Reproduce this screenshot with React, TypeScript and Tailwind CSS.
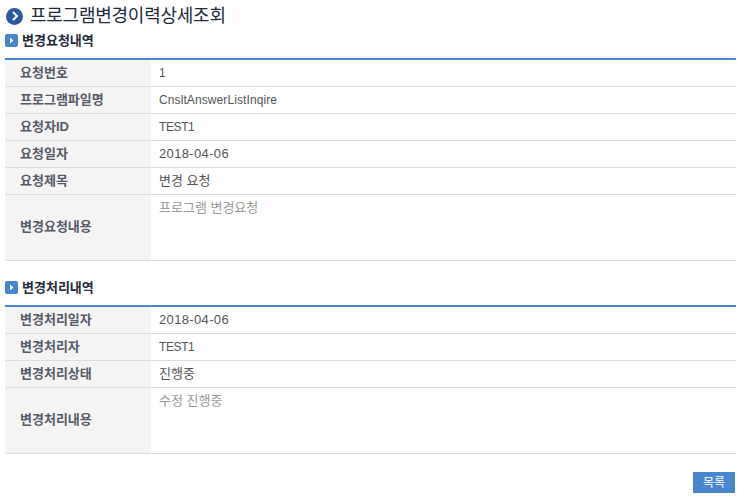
const font = { fontFamily: '"Liberation Sans", "Noto Sans CJK KR", sans-serif' };

interface Row {
  label: string;
  value: string;
  tall?: boolean;
  valueClass?: string;
}

const small = "text-[12px] tracking-[0.1px]";
const date = "text-[13px] tracking-[0.35px]";

const requestRows: Row[] = [
  { label: "요청번호", value: "1", valueClass: small },
  { label: "프로그램파일명", value: "CnsltAnswerListInqire", valueClass: small },
  { label: "요청자ID", value: "TEST1", valueClass: "text-[12px] tracking-[-0.4px]" },
  { label: "요청일자", value: "2018-04-06", valueClass: date },
  { label: "요청제목", value: "변경 요청" },
  { label: "변경요청내용", value: "프로그램 변경요청", tall: true },
];

const processRows: Row[] = [
  { label: "변경처리일자", value: "2018-04-06", valueClass: date },
  { label: "변경처리자", value: "TEST1", valueClass: "text-[12px] tracking-[-0.4px]" },
  { label: "변경처리상태", value: "진행중" },
  { label: "변경처리내용", value: "수정 진행중", tall: true },
];

function SectionTitle({ text }: { text: string }) {
  return (
    <div className="flex items-center gap-[4px] h-[20px] pl-[5px]">
      <span className="w-[13px] h-[13px] rounded-[2px] bg-[#4a86cf] flex items-center justify-center">
        <svg width="5" height="7" viewBox="0 0 5 7">
          <path d="M1 0.5 L4.5 3.5 L1 6.5 Z" fill="#ffffff" />
        </svg>
      </span>
      <h3 className="text-[13px] font-bold text-[#222a3a] pt-[2px]">{text}</h3>
    </div>
  );
}

function DetailTable({ rows }: { rows: Row[] }) {
  return (
    <div className="mx-[5px] border-t-2 border-[#4a86cf]">
      {rows.map((row) => (
        <div
          key={row.label}
          className={`flex border-b border-[#dcdcdc] ${row.tall ? "h-[66px]" : "h-[27px]"}`}
        >
          <div
            className={`w-[146px] shrink-0 bg-[#f4f4f4] pl-[15px] flex items-center text-[13px] font-bold text-[#555a66] ${
              row.tall ? "pb-[2px]" : ""
            }`}
          >
            {row.label}
          </div>
          <div
            className={`flex-1 pl-[8px] ${row.valueClass ?? "text-[13px]"} ${
              row.tall ? "pt-[3px] text-[#999999]" : "flex items-center text-[#555555]"
            }`}
          >
            {row.value}
          </div>
        </div>
      ))}
    </div>
  );
}

export default function App() {
  return (
    <div className="w-[741px] h-[498px] bg-white overflow-hidden" style={font}>
      <div className="flex items-center gap-[7px] pl-[6px] pt-[5px] h-[27px]">
        <span className="w-[17px] h-[17px] rounded-full bg-[#2c5a9c] flex items-center justify-center">
          <svg width="8" height="10" viewBox="0 0 8 10" fill="none">
            <path d="M2 1 L6 5 L2 9" stroke="#ffffff" strokeWidth="2" />
          </svg>
        </span>
        <h2 className="text-[18px] tracking-[-0.25px] text-[#222a3a]">프로그램변경이력상세조회</h2>
      </div>
      <div className="mt-[3px]">
        <SectionTitle text="변경요청내역" />
      </div>
      <div className="mt-[8px]">
        <DetailTable rows={requestRows} />
      </div>
      <div className="mt-[16px]">
        <SectionTitle text="변경처리내역" />
      </div>
      <div className="mt-[8px]">
        <DetailTable rows={processRows} />
      </div>
      <div className="flex justify-end pr-[6px] mt-[18px]">
        <button className="w-[42px] h-[21px] bg-[#4a86cf] text-white text-[12px] flex items-center justify-center">
          목록
        </button>
      </div>
    </div>
  );
}
